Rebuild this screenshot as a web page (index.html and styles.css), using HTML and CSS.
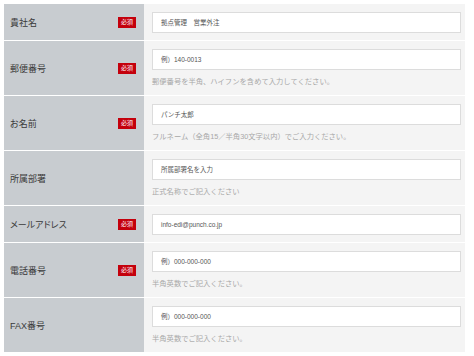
FILE: index.html
```html
<!doctype html>
<html>
<head>
<meta charset="utf-8">
<title>お問い合わせフォーム</title>
<link rel="stylesheet" href="styles.css">
</head>
<body>
<div class="form">
	<div class="row">
		<div class="label"><span>貴社名</span><em class="req">必須</em></div>
		<div class="field">
			<div class="input">拠点管理　営業外注</div>
		</div>
	</div>
	<div class="row">
		<div class="label"><span>郵便番号</span><em class="req">必須</em></div>
		<div class="field">
			<div class="input">例）140-0013</div>
			<p class="help">郵便番号を半角、ハイフンを含めて入力してください。</p>
		</div>
	</div>
	<div class="row">
		<div class="label"><span>お名前</span><em class="req">必須</em></div>
		<div class="field">
			<div class="input">パンチ太郎</div>
			<p class="help">フルネーム（全角15／半角30文字以内）でご入力ください。</p>
		</div>
	</div>
	<div class="row">
		<div class="label"><span>所属部署</span></div>
		<div class="field">
			<div class="input">所属部署名を入力</div>
			<p class="help">正式名称でご記入ください</p>
		</div>
	</div>
	<div class="row">
		<div class="label"><span>メールアドレス</span><em class="req">必須</em></div>
		<div class="field">
			<div class="input">info-edi@punch.co.jp</div>
		</div>
	</div>
	<div class="row">
		<div class="label"><span>電話番号</span><em class="req">必須</em></div>
		<div class="field">
			<div class="input">例）000-000-000</div>
			<p class="help">半角英数でご記入ください。</p>
		</div>
	</div>
	<div class="row">
		<div class="label"><span>FAX番号</span></div>
		<div class="field">
			<div class="input">例）000-000-000</div>
			<p class="help">半角英数でご記入ください。</p>
		</div>
	</div>
</div>
</body>
</html>
```
FILE: styles.css
```css
body{
	margin: 4px;
	background: #ffffff;
	font-family: "Liberation Sans", "Noto Sans CJK JP", sans-serif;
}

.form{
	width: 461px;
}

.row{
	display: flex;
	border-top: 1px solid rgba(255,255,255,0.6);
}

.row:first-child{
	border-top: none;
}

.label{
	width: 140px;
	box-sizing: border-box;
	padding: 0 8px 0 6px;
	background: #c8ccd0;
	display: flex;
	align-items: center;
	justify-content: space-between;
	font-size: 9px;
	color: #3a3a3a;
	font-feature-settings: "palt";
}

.req{
	font-style: normal;
	background: #c4000c;
	color: #ffffff;
	font-size: 6px;
	line-height: 11px;
	width: 18px;
	text-align: center;
}

.field{
	flex: 1;
	background: #f4f4f4;
	padding: 8px 4px 7px 8px;
}

.input{
	height: 21px;
	box-sizing: border-box;
	background: #ffffff;
	border: 1px solid #dcdcdc;
	padding-left: 8px;
	font-size: 6.5px;
	line-height: 19px;
	color: #555555;
}

.help{
	margin: 6px 0 0 0;
	font-size: 7.3px;
	line-height: 12px;
	color: #a8a8a8;
}
```
